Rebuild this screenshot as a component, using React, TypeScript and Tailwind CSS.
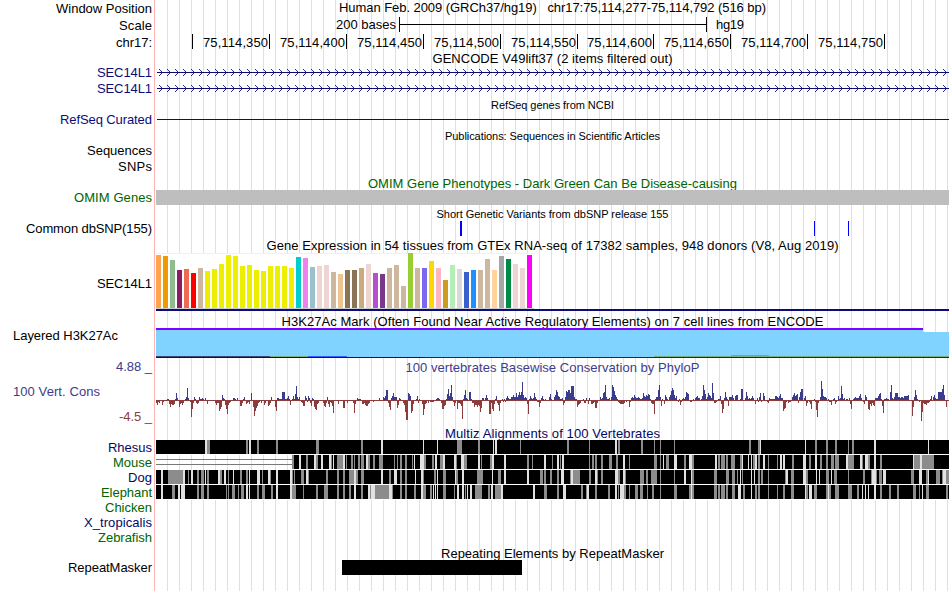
import { useLayoutEffect, useRef } from "react";

/** Text whose letter spacing is tuned so that it spans `w` pixels. */
function Fit({ text, w, className = "" }: { text: string; w: number; className?: string }) {
  const ref = useRef<HTMLSpanElement>(null);
  useLayoutEffect(() => {
    const el = ref.current;
    if (!el) return;
    el.style.letterSpacing = "0px";
    el.style.marginRight = "0px";
    const gap = (w - el.getBoundingClientRect().width) / (text.length - 1);
    el.style.letterSpacing = `${gap}px`;
    el.style.marginRight = `${-gap}px`;
  }, [text, w]);
  return (
    <span ref={ref} className={`inline-block whitespace-pre ${className}`}>
      {text}
    </span>
  );
}

const NAVY = "text-[#0c0c78]";
const GREEN = "text-[#006400]";
const CONS = "text-[#3c3c8c]";

type Label = { text: string; w: number; h: string; color?: string; side?: string };

const labels: Label[] = [
  { text: "Window Position", w: 96, h: "h-[17px]" },
  { text: "Scale", w: 33, h: "h-[17px]" },
  { text: "chr17:", w: 36, h: "h-[30px]" },
  { text: "SEC14L1", w: 55, h: "h-[16px]", color: NAVY },
  { text: "SEC14L1", w: 55, h: "h-[31px]", color: NAVY },
  { text: "RefSeq Curated", w: 92, h: "h-[31px]", color: NAVY },
  { text: "Sequences", w: 65, h: "h-[16px]" },
  { text: "SNPs", w: 34, h: "h-[31px]" },
  { text: "OMIM Genes", w: 78, h: "h-[31px]", color: GREEN },
  { text: "Common dbSNP(155)", w: 126, h: "h-[55px]" },
  { text: "SEC14L1", w: 55, h: "h-[52px]" },
  { text: "Layered H3K27Ac", w: 105, h: "h-[31px]", side: "justify-start pl-[13px]" },
  { text: "4.88 _", w: 36, h: "h-[25px]", color: CONS },
  { text: "100 Vert. Cons", w: 87, h: "h-[25px]", color: CONS, side: "justify-start pl-[13px]" },
  { text: "-4.5 _", w: 33, h: "h-[31px]", color: "text-[#8c3c3c]" },
  { text: "Rhesus", w: 44, h: "h-[15px]", color: "text-[#000a64]" },
  { text: "Mouse", w: 39, h: "h-[15px]", color: GREEN },
  { text: "Dog", w: 24, h: "h-[15px]", color: "text-[#000a64]" },
  { text: "Elephant", w: 51, h: "h-[15px]", color: GREEN },
  { text: "Chicken", w: 47, h: "h-[15px]", color: GREEN },
  { text: "X_tropicalis", w: 68, h: "h-[15px]", color: "text-[#000a64]" },
  { text: "Zebrafish", w: 54, h: "h-[30px]", color: GREEN },
  { text: "RepeatMasker", w: 84, h: "h-[16px]" },
];

function Title({ text, w, small, className = "" }: { text: string; w: number; small?: boolean; className?: string }) {
  return (
    <div className={`flex shrink-0 justify-center ${small ? "h-[14px] text-[11px] leading-[14px]" : "h-[14px] leading-[15px]"} ${className}`}>
      <Fit text={text} w={w} />
    </div>
  );
}

const rulerCells: [string, string][] = [
  ["75,114,350", "w-[77px]"],
  ["75,114,400", "w-[77px]"],
  ["75,114,450", "w-[77px]"],
  ["75,114,500", "w-[77px]"],
  ["75,114,550", "w-[77px]"],
  ["75,114,600", "w-[76px]"],
  ["75,114,650", "w-[77px]"],
  ["75,114,700", "w-[77px]"],
  ["75,114,750", "w-[77px]"],
];

function Transcript() {
  const arrows = Array.from({ length: 99 }, (_, i) => 162 + i * 8);
  return (
    <svg className="block h-4 w-[793px] shrink-0" viewBox="156 0 793 16">
      <path d="M157 6.5H949" stroke="#0c0c78" />
      <path d={arrows.map((x) => `M${x - 3} 3l3.5 3.5l-3.5 3.5`).join("")} stroke="#0c0c78" strokeWidth="0.9" fill="none" />
    </svg>
  );
}

const Y = "#eeee00";
const TAN = "#cdb79e";
const tissues: [string, number][] = [
  ["#ffa54f", 53], ["#ee9a00", 52], ["#8fbc8f", 48], ["#8b1c62", 38], ["#ee6a50", 39], ["#ff0000", 35], [TAN, 40],
  [Y, 37], [Y, 39], [Y, 44], [Y, 53], [Y, 52], [Y, 42], [Y, 43], [Y, 38], [Y, 37], [Y, 42], [Y, 42], [Y, 42], [Y, 40],
  ["#00cdcd", 51], ["#ee82ee", 50], ["#9ac0cd", 41], ["#eed5d2", 42], ["#eed5d2", 43], [TAN, 36], ["#eec591", 34],
  ["#8b7355", 38], ["#8b7355", 38], ["#cdaa7d", 40], ["#eed5d2", 44], ["#b452cd", 35], ["#7a378b", 34], [TAN, 40],
  [TAN, 43], [TAN, 22], ["#9acd32", 55], [TAN, 40], ["#7b68ee", 40], ["#ffd700", 47], ["#ffb6c1", 40], ["#cd9b1d", 28],
  ["#b4eeb4", 43], ["#d9d9d9", 39], ["#3a5fcd", 36], ["#1e90ff", 38], [TAN, 38], [TAN, 49], ["#ffd39b", 38],
  ["#a6a6a6", 52], ["#008b45", 49], ["#eed5d2", 44], ["#eed5d2", 40], ["#ff00ff", 53],
];

function Expression() {
  return (
    <svg className="block h-[58px] w-[793px] shrink-0" viewBox="156 253 793 58" shapeRendering="crispEdges">
      <rect x="156" y="253" width="378" height="56" fill="#fff" />
      <rect x="156" y="253" width="378" height="1" fill="#f0f0f0" />
      <rect x="156" y="308" width="378" height="1" fill="#cccccc" />
      {tissues.map(([c, h], i) => (
        <rect key={i} x={156 + 7 * i} y={308 - h} width="5" height={h} fill={c} />
      ))}
      <rect x="156" y="309" width="793" height="2" fill="#0c0c78" />
    </svg>
  );
}

function Acetylation() {
  return (
    <svg className="block h-[30px] w-[793px] shrink-0" viewBox="156 328 793 30" shapeRendering="crispEdges">
      <path d="M156 328H923V332H949V357H156Z" fill="#80d2ff" />
      <path d="M156 328H923V330H156Z" fill="#8000ff" />
      <path d="M156 356h114v1h-114z" fill="#3c4678" />
      <path d="M270 356h38v1h-38zM654 356h295v1h-295zM731 355h38v1h-38z" fill="#78af82" />
      <path d="M308 356h39v1h-39z" fill="#3264ff" />
      <path d="M156 357h793v1h-793z" fill="#14284b" />
      <path d="M156 357h267v1h-267z" fill="#1e0a32" />
    </svg>
  );
}

/* Conservation scores, one per pixel column; each run begins at its first column. */
const scores: [number, string][] = [
  [156, "-3 -5 -2 -3 -1 -1 -5 -2 -1 -1 -1 1 1 -4 -7 -4 -5 -5 -4 1 7 2 -1 -7 -4 -3 -5 -3 -1 1 3 12 2 -1 -2 -17 -9 -3 3 1 -3 -4 -3 3 1 1 2 1 -1 2 -1 -4 -1 -1 -1 -1 -1 -1 -1 -3 -5 -3 -3 -11 -9 -7 5 2 1 -5 -9 -14 -5 -3 -2 -1 -1 2 2 1 -1 2 -1 -1 -6 -6 -3 1 3 -1 -4 -3 -2 -4 -1 7 -1 -7 -16 -11 -8 -6 -3 -2 -1 -3 -1 -1 -5 -3 -1 -1 -6 -5 -3 3 -1 -1 -1 -7 -11"],
  [277, "2 2 1 1 1 8 8 8 1 1 2 4 1 -5 -1 1 4 1 6 14 3 1 3 -1 -2 -3 -6 -6 4 2 -2 4 2 -3 -6 2 1 -7 -9 -10 -4 -3 -1 -1 -1 -1 -3 -6 -7 -3 3 -4 -7 -2 -3 -6 -13 -1 -1 -1 -1 -4 -1 -1 -1 -1 -8 -8 -1 -1 -3 -1 -1 -1 -1 -1 -3 -13 -4 -1 2 1 1 1 -1 -4 -4 -3 -5 -6 -6 -4 -3 -1 -1 -1 -2 -1 -1 -1 -1 -1 2 -1 -1 -1 3 2 4 10 10 -3 -7 -10 2 4 7 3 3 3 -8 -5 2 1 -1 -1 -3 -5 -12 -20 -20 7 6"],
  [410, "4 -13 -11 -4 -1 -1 1 4 -3 1 -1 -1 -4 -15 -9 -4 -3 -1 -3 -1 -2 -2 -2 -2 -1 -1 1 2 2 1 -1 -3 -9 -9 -6 -5 1 6 11 4 7 15 3 -2 -6 -3 -1 -9 -3 -3 -4 -6 -19 1 5 10 2 1 -1 8 8 1 -3 -3 -7 -5 -5 -7 -5 -6 -12 -8 2 2 -1 2 5 2 -1 -14 -14 -3 -9 -11 -4 1 4 -3 -5 -11 -3 -1 1 -2 1 -2 2 4 2 1 1 3 3 5 3 3 7 3 5 8 5 8 18 5 2 3 2 -4 -14 1 4 2 1 2 7 3 1 -2 -2 -7 -3 2 4 1 -1 1 -1 -1 -1"],
  [549, "3 6 1 -1 -1 3 5 10 8 4 3 1 1 2 -5 -3 3 9 8 10 10 7 14 14 14 3 1 1 -7 -5 -4 -3 -1 -1 1 -3 -3 2 -1 -4 2 -1 -4 -4 -3 -2 -8 -8 -3 -1 -1 3 1 2 7 8 15 3 1 1 2 -1 3 15 13 9 5 3 1 -2 -3 -4 -4 -4 -4 -3 -1 -2 -1 -1 -7 -2 2 3 2 5 3 2 2 3 2 1 1 2 7 4 3 5 4 6 5 1 -3 -4 -4 -14 1 3 3 10 15 3 -6 1 -1 -4 5 3 1 -1 3 5 9 12 10 5 2 4 -1 -2 1"],
  [680, "-5 -2 1 2 1 3 8 7 6 -1 -2 -2 -1 1 -1 2 3 4 2 2 -1 1 4 15 10 6 1 3 7 5 4 2 17 7 -3 -3 -2 -1 1 1 4 -4 -13 -9 2 8 3 1 -6 3 3 3 5 2 -1 4 5 5 -1 -1 1 11 11 -1 -1 2 8 4 1 2 1 2 4 2 -1 -4 -1 2 -2 3 7 -2 -1 7 4 -1 -1 -2 -3 2 1 1 1 1 1 4 4 3 2 4 6 2 2 -11 -9 -8 -2 -1 -3 -2 -2 -1 3 5 7 4 5 6 -3 3 8 11 11 -1 2 4 -6 -3 -1 -2 -4 -9 -1 -1 1 -2 -10 -17 -3 -1 3 19 11 4 3 3 2"],
  [827, "-1 1 -2 -2 -5 -1 1 2 -4 -2 -1 4 1 2 14 6 1 2 -1 1 1 -1 2 -4 -9 -1 1 2 3 2 2 2 4 6 2 -1 -2 -4 5 3 -1 -9 -10 -4 -6 -3 -5 -6 2 2 2 4 6 7 1 -6 -13 1 1 2 1 1 -1 8 15 2 1 3 7 7 7 3 3 2 3 3 2 4 4 4 4 5 -1 -1 -1 -16 -7 3 10 5 1 -1 -2 -1 -21 -12 -3 -4 -4 -5 -3 -3 -2 1 4 -1 3 5 2 1 1 8 8 8 8 11 15 5 -1 -7 -1 -1"],
];

function Wiggle() {
  let up = "";
  let down = "";
  for (const [start, run] of scores) {
    run.split(" ").map(Number).forEach((v, i) => {
      const bar = `M${start + i} 400h1v${-v}h-1z`;
      if (v > 0) up += bar;
      else down += bar;
    });
  }
  return (
    <svg className="block h-[51px] w-[793px] shrink-0" viewBox="156 375 793 51" shapeRendering="crispEdges">
      <path d="M156 400h793v1h-793z" fill="#8c3c3c" />
      <path d={up} fill="#3c3c8c" />
      <path d={down} fill="#8c3c3c" />
    </svg>
  );
}

/* Stripes as column, shade (g = grey, l = light) and width. */
const rhesus = "205l2 207g3 246g2 249l2 257g2 276g2 316g3 361g2 381l2 423l1 437l1 457g5 478g2 493l1 495l2 520g1 567g2 589g1 615l2 618g2 641g2 654g1 660g1 674g1 749g2 758g2 760l1 805l1 815g2 826g2 835g2 848g1 852g2 874l2 928l1";
const mouse = "292g2 299l2 306g2 314l2 316g2 321l2 329l2 331g1 333l1 337g6 343l2 346g1 351g2 354g1 358g2 361g3 366l2 368g2 373g2 379g4 394g1 397g1 400g2 405g2 412g1 414l1 420l4 424g2 432g2 435l2 440g3 443l2 454l2 456g1 461l3 464g3 478l2 481g1 490g2 492l2 504l2 527g2 532g1 544l2 552g1 557l2 560g1 562l2 589g1 592g2 595g2 601g2 609g3 616g2 623l2 629g1 654g3 660g1 663l1 666g3 674l3 684g2 689l3 692g2 715l2 718g2 721g4 726g2 731g4 740g2 742l1 748l1 751l1 753g2 755l2 758g2 763l2 768g1 777g1 780l2 783l2 792g2 803l3 809g2 815l2 820g2 826g2 831g3 835g4 846l2 848g4 852g2 860l2 862g1 865l3 868g2 874l2 880g2 913l1 914g6 920l2 922g9 931g3";
const dog = "161l2 168g15 183l2 188g1 191l2 197g2 201g3 205l1 207g2 218l2 220g2 224l2 228g1 233l1 240g2 246g2 249l1 257l3 262g1 268l2 270g1 276l2 290l2 292g1 294g1 301g3 306l2 308g1 326g2 337g2 343g2 349g5 354l2 356g2 361g3 381l2 389g2 394l3 400g2 405g2 415l1 421l2 423g1 434g2 437l1 443g3 455l1 456g2 462l2 477g5 482g1 492l1 498g3 504l2 527l2 540g3 544g2 550g2 557g2 561l3 570g1 571l2 573g5 578g2 589g2 595l2 597g1 601g2 615l3 618g2 623l2 625g1 640g4 646g2 651g6 660g1 674g1 684l2 691l1 692g2 714g3 726g3 732g3 737g1 740l1 742g1 751l1 754l1 758g2 761g2 768g1 785g1 786l2 791g3 803l3 806g2 816l1 819l1 826g3 831l1 834g3 848g1 863g2 871g1 872l2 874l2 876g1 879g3 883l3 911g3 919l3 926g2 928l1 936g4 942g1 943l3 946g3";
const elephant = "161l2 172g3 178l2 181l4 197g2 201g3 207g2 226g1 228g1 232g3 238g1 241g3 246l2 249l1 257g2 262g3 271g2 276l2 290l2 292g4 303g1 316g2 324g4 337g2 343g2 349g2 354l2 361g2 368l2 370g1 371l4 375g14 389l3 392g1 400g2 405g2 414g2 421l2 423g3 430g2 433l1 435l1 437l1 443g3 454g1 457l2 462l2 465g1 467l1 470l2 475g7 488g2 491l2 495g6 501l2 533l2 544g3 557g2 563l3 581g2 586g1 587l2 595g2 608g2 615l2 618g1 620l4 624g2 629g1 635g3 640g3 647g1 652g2 660g1 674g3 689g2 691l1 692g2 714g3 718g2 721g4 726g2 732g3 738l3 743g2 751l1 755g2 758g2 768g1 777g1 783g2 791g3 805l1 806g2 809l3 814g3 826g2 828l1 829g2 835g4 848g4 857g2 862l1 865l1 868l1 874l2 880g2 889g2 897g2 913g3 919g1 922l1 926g2 928g1 946g2";

function Alignment({ stripes, from = 156 }: { stripes: string; from?: number }) {
  return (
    <svg className="block h-[15px] w-[793px] shrink-0" viewBox="156 0 793 15" shapeRendering="crispEdges">
      <rect x={from} y="0" width={949 - from} height="15" fill="#fff" />
      <rect x={from} y="0" width={949 - from} height="14" fill="#000" />
      {from > 156 && <path d={`M156 4h${from - 156}v1H156zM156 9h${from - 156}v1H156z`} fill="#787878" />}
      {stripes.split(" ").map((s) => (
        <rect key={s} x={s.slice(0, 3)} y="0" width={s.slice(4)} height="14" fill={s[3] === "g" ? "#8c8c8c" : "#e1e1e1"} />
      ))}
    </svg>
  );
}

export default function App() {
  return (
    <div className="flex h-[591px] w-[950px] overflow-hidden bg-white font-['Liberation_Sans',Arial,sans-serif] text-[13px] text-black">
      <div className="flex w-[154px] shrink-0 flex-col pt-px pr-[2px]">
        {labels.map((l, i) => (
          <div key={i} className={`flex shrink-0 leading-[16px] ${l.h} ${l.color ?? ""} ${l.side ?? "justify-end"}`}>
            <Fit text={l.text} w={l.w} />
          </div>
        ))}
      </div>
      <div className="mr-px w-px shrink-0 bg-[#ffb4b4]" />
      <div className="flex w-[793px] shrink-0 flex-col bg-[linear-gradient(to_right,#dcdcff_1px,transparent_1px)] bg-[length:12px_100%] bg-[position:11px_0]">
        <Title text="Human Feb. 2009 (GRCh37/hg19)   chr17:75,114,277-75,114,792 (516 bp)" w={427} />
        <div className="mt-[3px] flex h-[15px] shrink-0 leading-[15px]">
          <div className="flex w-[243px] justify-end pr-[3px]">
            <Fit text="200 bases" w={60} />
          </div>
          <div className="flex h-[15px] w-[308px] items-center border-x border-black">
            <div className="h-px w-full bg-black" />
          </div>
          <Fit text="hg19" w={28} className="ml-[9px]" />
        </div>
        <div className="mt-[2px] flex h-[15px] shrink-0 leading-[17px]">
          <div className="w-[37px] border-r border-black" />
          {rulerCells.map(([t, w]) => (
            <div key={t} className={`flex justify-end border-r border-black pr-px ${w}`}>
              <Fit text={t} w={65} />
            </div>
          ))}
        </div>
        <Title className="mt-[2px]" text="GENCODE V49lift37 (2 items filtered out)" w={240} />
        <div className="mt-px flex shrink-0 flex-col">
          <Transcript />
          <Transcript />
        </div>
        <Title small text="RefSeq genes from NCBI" w={123} />
        <div className="mt-[7px] mb-[9px] ml-px h-px shrink-0 bg-[#0c0c78]" />
        <Title small text="Publications: Sequences in Scientific Articles" w={215} />
        <Title className="mt-[33px] text-[#006400]" text="OMIM Gene Phenotypes - Dark Green Can Be Disease-causing" w={369} />
        <div className="h-[15px] shrink-0 bg-[#bebebe]" />
        <Title small className="mt-[2px]" text="Short Genetic Variants from dbSNP release 155" w={232} />
        <div className="flex h-[15px] shrink-0">
          <div className="ml-[304px] w-[2px] bg-[#0000ff]" />
          <div className="ml-[352px] w-px bg-[#0000ff]" />
          <div className="ml-[33px] w-px bg-[#0000ff]" />
        </div>
        <Title className="mt-[2px] mb-px" text="Gene Expression in 54 tissues from GTEx RNA-seq of 17382 samples, 948 donors (V8, Aug 2019)" w={572} />
        <Expression />
        <Title className="mt-[3px]" text="H3K27Ac Mark (Often Found Near Active Regulatory Elements) on 7 cell lines from ENCODE" w={542} />
        <Acetylation />
        <Title className="mt-[2px] mb-px text-[#3c3c8c]" text="100 vertebrates Basewise Conservation by PhyloP" w={294} />
        <Wiggle />
        <Title className="text-[#000a64]" text="Multiz Alignments of 100 Vertebrates" w={215} />
        <Alignment stripes={rhesus} />
        <Alignment stripes={mouse} from={292} />
        <Alignment stripes={dog} />
        <Alignment stripes={elephant} />
        <Title className="mt-[46px]" text="Repeating Elements by RepeatMasker" w={223} />
        <div className="ml-[186px] h-[15px] w-[180px] shrink-0 bg-black" />
      </div>
    </div>
  );
}
